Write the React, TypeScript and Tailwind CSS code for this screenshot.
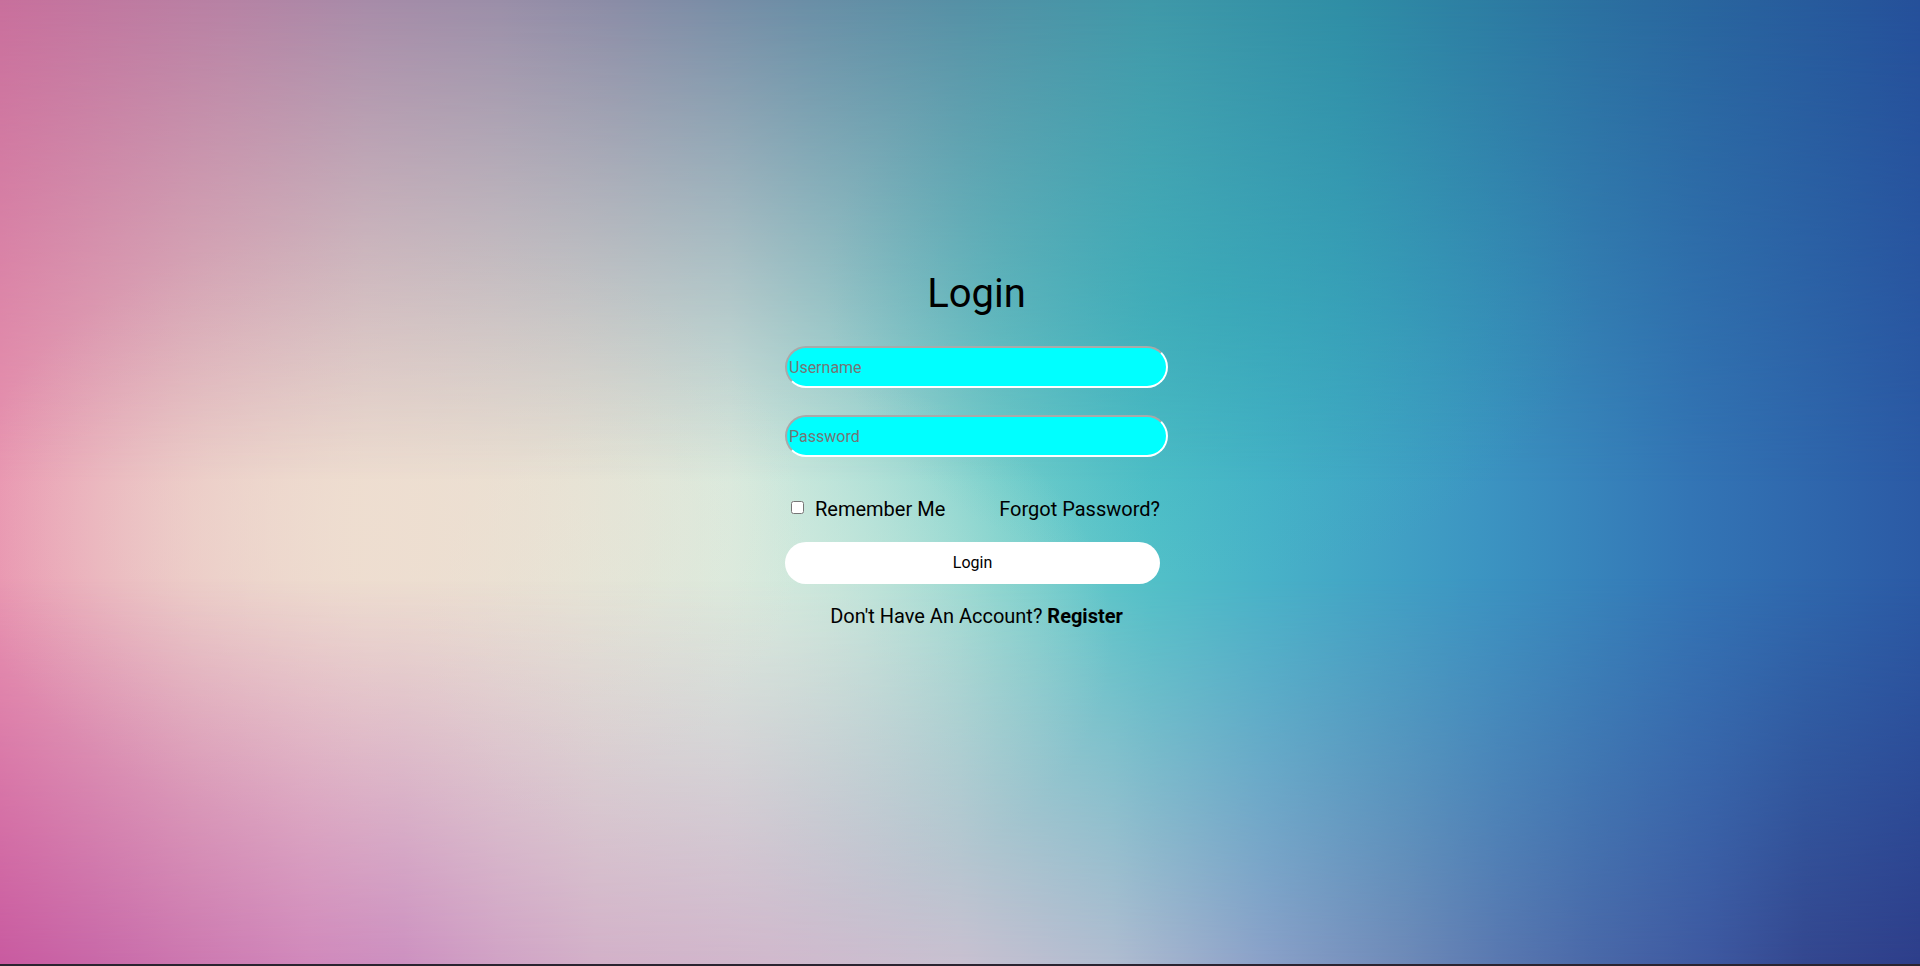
export default function App() {
  return (
    <div className="w-full h-[966px] flex flex-col bg-[#2a2430] font-['Roboto',sans-serif] overflow-hidden text-black">
      <div className="grid h-[964px] w-full">
        <div className="col-start-1 row-start-1 [background-image:linear-gradient(to_right,#e994b0_0%,#ebc0c2_10%,#eddcd0_19%,#e3e6d8_30%,#d6ebdf_38%,#a8ded6_45%,#78d0cc_52%,#52c0c8_60%,#48b2c8_66%,#3c95c2_77%,#3375b5_88%,#2b5aa5_100%)]" />
        <div className="col-start-1 row-start-1 [background-image:linear-gradient(to_right,#c86f9c_0%,#b682a4_12%,#a78ba8_19%,#9a8ea8_26%,#8a8ca6_32%,#6a8ea6_42%,#5590a5_50%,#3f98a8_60%,#2f8ea5_70%,#2b70a0_83%,#25509a_100%)] [mask-image:linear-gradient(to_bottom,#000_0%,transparent_50%)]" />
        <div className="col-start-1 row-start-1 [background-image:linear-gradient(to_right,#c85aa0_0%,#c868a8_5%,#cc78b0_10%,#d088bb_16%,#cc90c0_21%,#d0a2c5_26%,#d2b0c8_31%,#d0b8cc_40%,#c8c0d0_50%,#b0bcd0_58%,#8aa0c8_66%,#6f8ab8_73%,#5a78b0_78%,#4a68a8_83%,#3e58a0_89%,#34478f_94%,#2e3e8a_100%)] [mask-image:linear-gradient(to_bottom,transparent_60%,#000_100%)]" />
        <div className="col-start-1 row-start-1 [background-image:radial-gradient(ellipse_22%_32%_at_20%_55%,rgba(238,222,208,0.85),rgba(238,222,208,0)),radial-gradient(ellipse_18%_28%_at_40%_66%,rgba(220,236,222,0.7),rgba(220,236,222,0)),radial-gradient(ellipse_20%_30%_at_63%_30%,rgba(48,178,190,0.55),rgba(48,178,190,0))]" />
        <main className="relative z-10 col-start-1 row-start-1 flex justify-center pl-[33px] pt-[270px]">
          <form className="w-[383px] flex flex-col" onSubmit={(e) => e.preventDefault()}>
            <h1 className="text-[40px] leading-[47px] font-normal text-center">Login</h1>
            <input
              type="text"
              placeholder="Username"
              className="mt-[29px] h-[42px] w-full rounded-full bg-[#00ffff] border-2 border-t-[#a9a9a9] border-l-[#a9a9a9] border-r-white border-b-white px-[2px] text-[16px] placeholder:text-[#757575] outline-none"
            />
            <input
              type="password"
              placeholder="Password"
              className="mt-[27px] h-[42px] w-full rounded-full bg-[#00ffff] border-2 border-t-[#a9a9a9] border-l-[#a9a9a9] border-r-white border-b-white px-[2px] text-[16px] placeholder:text-[#757575] outline-none"
            />
            <div className="mt-[41px] w-[375px] flex justify-between items-start text-[20px] leading-[23px]">
              <label className="flex items-start">
                <input type="checkbox" className="ml-[6px] mr-[11px] mt-[3px] w-[13px] h-[13px]" />
                Remember Me
              </label>
              <a href="#">Forgot Password?</a>
            </div>
            <button type="submit" className="mt-[21px] w-[375px] h-[42px] rounded-full bg-white text-[16px] text-black">
              Login
            </button>
            <p className="mt-[21px] text-center text-[20px] leading-[23px]">
              Don't Have An Account? <a href="#" className="font-bold">Register</a>
            </p>
          </form>
        </main>
      </div>
      <div className="h-[2px] bg-[#2a2430]" />
    </div>
  );
}
